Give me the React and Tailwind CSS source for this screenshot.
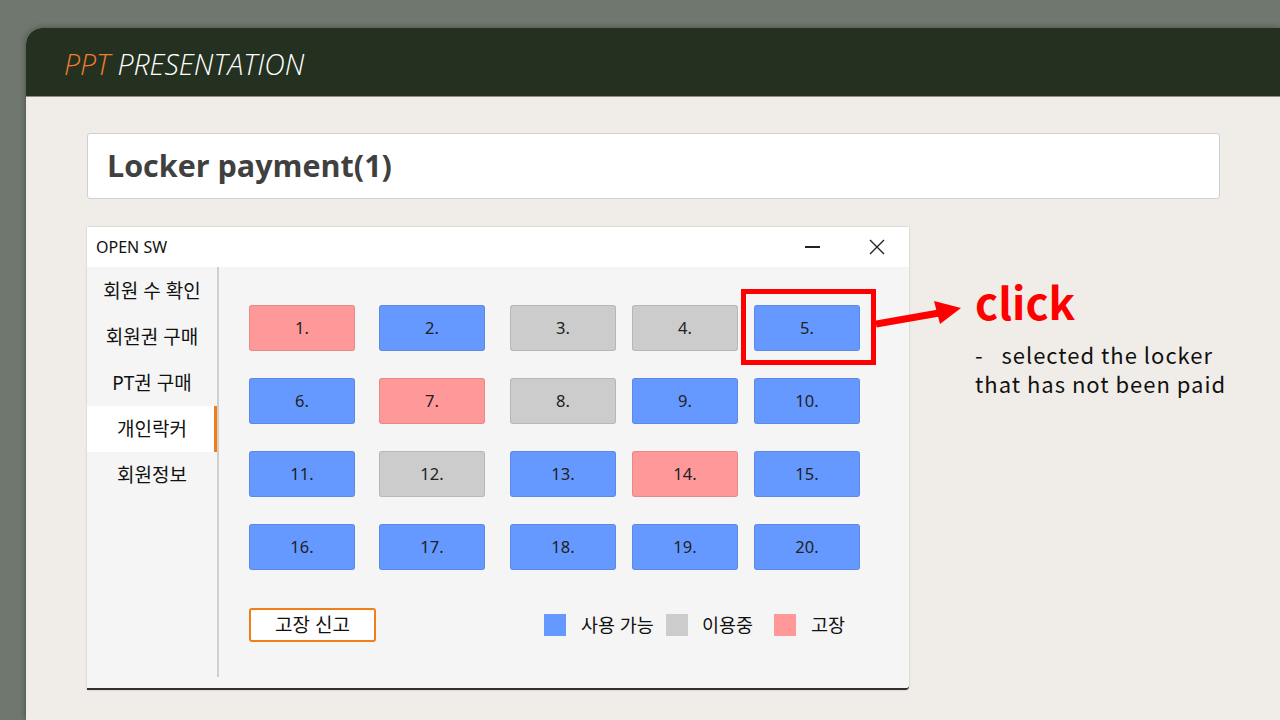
import React from 'react';

const lockers = [
  'bad', 'free', 'used', 'used', 'free',
  'free', 'bad', 'used', 'free', 'free',
  'free', 'used', 'free', 'bad', 'free',
  'free', 'free', 'free', 'free', 'free',
];

const tone = {
  free: 'bg-[#6699ff]',
  used: 'bg-[#cccccc]',
  bad: 'bg-[#ff9999]',
};

const menu = ['회원 수 확인', '회원권 구매', 'PT권 구매', '개인락커', '회원정보'];

const kr = { fontFamily: '"Noto Sans", "Noto Sans CJK KR", sans-serif' };

function LockerWindow() {
  return (
    <div className="relative w-[822px] h-[463px] shrink-0">
      <div className="flex flex-col h-full bg-[#f5f5f5] border-b-2 border-[#2f2f2f] rounded-br-[4px] shadow-[0_0_2px_rgba(0,0,0,0.25)]">
        {/* title bar */}
        <div className="flex items-center h-[40px] bg-white pl-[9px] shrink-0">
          <span className="text-[16px] text-[#111]" style={kr}>OPEN SW</span>
          <div className="ml-auto flex items-center">
            <div className="w-[15px] h-[1.5px] bg-[#222] mr-[49px]" />
            <svg width="16" height="16" viewBox="0 0 16 16" className="mr-[24px]">
              <path d="M1 1 L15 15 M15 1 L1 15" stroke="#222" strokeWidth="1.4" />
            </svg>
          </div>
        </div>
        <div className="flex flex-1">
          {/* sidebar */}
          <div className="w-[130px] shrink-0 flex flex-col pt-[1px]">
            {menu.map((m, i) => (
              <div
                key={m}
                className={
                  'h-[46px] flex items-center justify-center text-[19px] text-[#111] ' +
                  (i === 3 ? 'bg-white border-r-[3px] border-[#f07f1a] pl-[3px]' : '')
                }
                style={kr}
              >
                {m}
              </div>
            ))}
          </div>
          <div className="w-[2px] bg-[#cfcfcf] mb-[11px]" />
          {/* main */}
          <div className="flex flex-col pl-[30px] pt-[38px]">
            <div className="grid grid-cols-[130px_131px_122px_122px_106px] gap-y-[27px]">
              {lockers.map((s, i) => (
                <div
                  key={i}
                  className={
                    'w-[106px] h-[46px] flex items-center justify-center rounded-[3px] border border-black/10 text-[16.5px] text-[#222] ' +
                    tone[s]
                  }
                  style={kr}
                >
                  {i + 1}.
                </div>
              ))}
            </div>
            <div className="flex items-center mt-[38px]">
              <div
                className="w-[127px] h-[34px] flex items-center justify-center bg-white border-2 border-[#f07f1a] rounded-[3px] text-[19px] text-[#111]"
                style={kr}
              >
                고장 신고
              </div>
              <div className="flex items-center ml-[168px] text-[18.5px] text-[#111]" style={kr}>
                <div className="w-[22px] h-[22px] bg-[#6699ff]" />
                <span className="ml-[15px]">사용 가능</span>
                <div className="w-[22px] h-[22px] bg-[#cccccc] ml-[12px]" />
                <span className="ml-[14px]">이용중</span>
                <div className="w-[22px] h-[22px] bg-[#ff9999] ml-[21px]" />
                <span className="ml-[15px]">고장</span>
              </div>
            </div>
          </div>
        </div>
      </div>
      {/* highlight over locker 5 */}
      <div className="absolute left-[654px] top-[62px] w-[135px] h-[76px] border-[5px] border-[#ff0000]" />
      <svg className="absolute left-[789px] top-[68px]" width="90" height="36" viewBox="0 0 90 36">
        <line x1="0" y1="29" x2="63" y2="18" stroke="#ff0000" strokeWidth="7" />
        <polygon points="58,6 85,13 64,29" fill="#ff0000" />
      </svg>
    </div>
  );
}

export default function App() {
  return (
    <div className="w-[1280px] h-[720px] bg-[#6f776e] overflow-hidden pt-[28px] pl-[26px]">
      <div className="h-full flex flex-col rounded-tl-[16px] overflow-hidden bg-[#f0ede8] shadow-[0_0_6px_rgba(0,0,0,0.35)]">
        <div className="h-[69px] bg-[#243020] border-b border-[#8a8f84] flex items-center pl-[38px] pt-[4px] shrink-0">
          <span
            className="italic font-light text-[28.5px]"
            style={{ fontFamily: '"Open Sans", sans-serif' }}
          >
            <span className="text-[#ef7d2d]">PPT</span>
            <span className="text-white"> PRESENTATION</span>
          </span>
        </div>
        <div className="flex flex-col pl-[61px] pr-[60px] pt-[36px]">
          <div className="h-[66px] bg-white border border-[#cfcfd6] rounded-[3px] flex items-center pl-[19px]">
            <span
              className="font-bold text-[30.5px] text-[#404040]"
              style={{ fontFamily: '"Open Sans", sans-serif' }}
            >
              Locker payment(1)
            </span>
          </div>
          <div className="flex mt-[28px]">
            <LockerWindow />
            <div className="ml-[66px] pt-[50px] flex flex-col" style={{ fontFamily: '"Noto Sans CJK KR", "Noto Sans", sans-serif' }}>
              <span className="text-[#ff0000] font-bold text-[44px] leading-[48px]">click</span>
              <span className="text-[22px] leading-[29px] tracking-[1px] text-[#111] mt-[15px] whitespace-pre">-   selected the locker</span>
              <span className="text-[22px] leading-[29px] tracking-[1px] text-[#111] whitespace-pre">that has not been paid</span>
            </div>
          </div>
        </div>
      </div>
    </div>
  );
}
